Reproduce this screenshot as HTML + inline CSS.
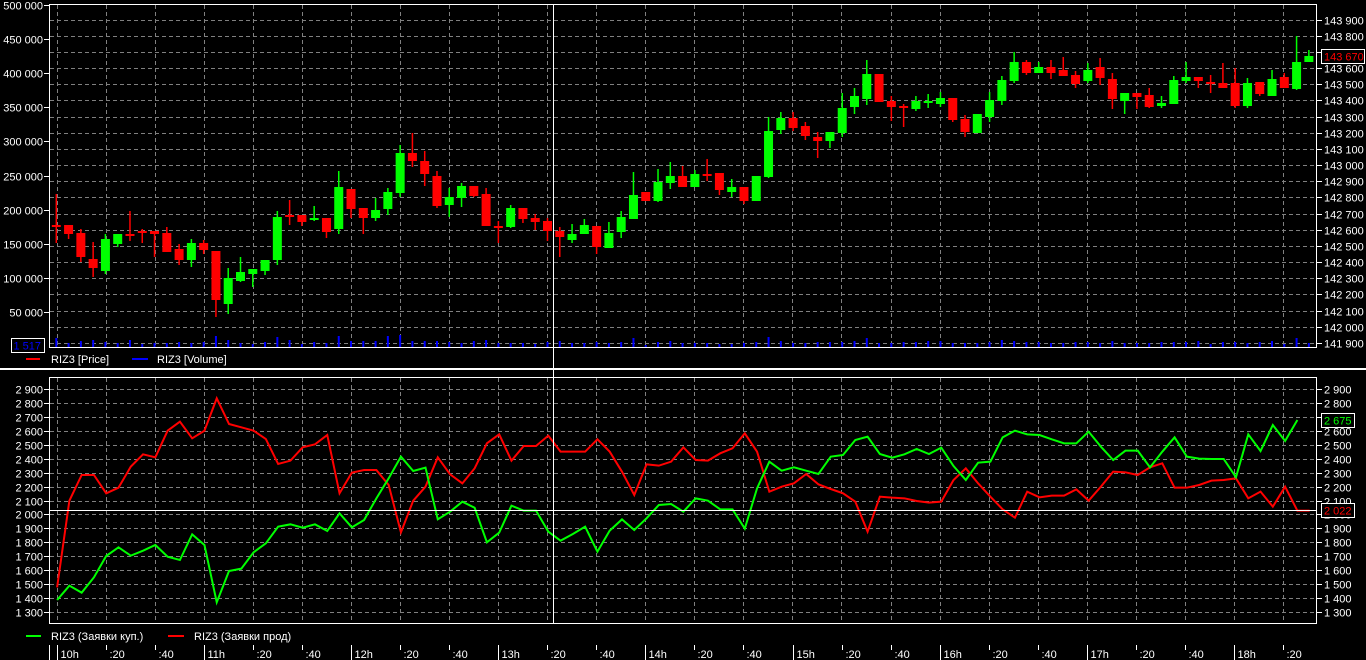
<!DOCTYPE html>
<html><head><meta charset="utf-8"><style>
html,body{margin:0;padding:0;background:#000;width:1366px;height:660px;overflow:hidden}
svg{display:block}
text{font-family:"Liberation Sans","DejaVu Sans",sans-serif;font-size:11px;fill:#fff}
</style></head><body>
<svg id="s" width="1366" height="660" xmlns="http://www.w3.org/2000/svg">
<rect width="1366" height="660" fill="#000"/>
<g id="grid" stroke="#808080" stroke-width="1" stroke-dasharray="4,3"></g>
<g id="cand"></g>
<g id="vol" fill="#0000ff"></g>
<!-- bottom lines -->
<g transform="translate(57.1,380) scale(12.28,0.33333)" fill="none">
<polyline vector-effect="non-scaling-stroke" stroke="#ff0000" stroke-width="2" points="0,622 1,362 2,285 3,285 4,340 5,323 6,260 7,223 8,232 9,152 10,125 11,175 12,152 13,55 14,132 15,142 16,152 17,177 18,252 19,242 20,202 21,193 22,165 23,340 24,278 25,270 26,270 27,315 28,457 29,362 30,320 31,232 32,283 33,310 34,265 35,190 36,163 37,242 38,198 39,198 40,167 41,215 42,215 43,215 44,178 45,215 46,275 47,345 48,253 49,257 50,245 51,202 52,240 53,242 54,220 55,205 56,160 57,215 58,335 59,320 60,310 61,282 62,313 63,327 64,340 65,365 66,455 67,350 68,353 69,355 70,363 71,368 72,365 73,300 74,265 75,310 76,350 77,388 78,413 79,335 80,352 81,347 82,347 83,328 84,362 85,320 86,275 87,277 88,285 89,262 90,250 91,323 92,323 93,315 94,302 95,300 96,295 97,355 98,335 99,380 100,320 101,392 102,392"/>
<polyline vector-effect="non-scaling-stroke" stroke="#00ff00" stroke-width="2" points="0,660 1,617 2,638 3,592 4,528 5,502 6,527 7,512 8,495 9,530 10,540 11,463 12,495 13,667 14,573 15,566 16,517 17,490 18,440 19,433 20,443 21,433 22,453 23,400 24,442 25,420 26,355 27,295 28,230 29,273 30,263 31,418 32,395 33,365 34,383 35,487 36,458 37,377 38,392 39,392 40,455 41,482 42,462 43,440 44,515 45,452 46,418 47,450 48,415 49,375 50,372 51,395 52,355 53,362 54,388 55,388 56,446 57,325 58,245 59,272 60,262 61,272 62,282 63,230 64,225 65,180 66,170 67,222 68,233 69,223 70,207 71,222 72,203 73,258 74,300 75,248 76,245 77,172 78,152 79,163 80,165 81,178 82,190 83,190 84,155 85,200 86,240 87,212 88,212 89,262 90,215 91,172 92,230 93,236 94,237 95,237 96,292 97,163 98,213 99,135 100,183 101,120"/>
</g>
<!-- frames -->
<g stroke="#fff" fill="none" stroke-width="1">
<rect x="49.5" y="4.5" width="1267" height="343"/>
<rect x="49.5" y="377.5" width="1267" height="246"/>
<line x1="0" y1="369" x2="1366" y2="369" stroke-width="2"/>
<line x1="553.5" y1="5" x2="553.5" y2="624"/>
<line x1="50" y1="510.5" x2="1316" y2="510.5"/>
</g>
<g id="ticks" stroke="#fff" stroke-width="1"></g>
<g id="labels"></g>
<!-- value boxes -->
<rect x="11.5" y="338.5" width="33" height="14" fill="#000" stroke="#fff"/>
<text x="41" y="349.5" text-anchor="end" style="fill:#0000ff">1 517</text>
<rect x="1321.5" y="49.5" width="43" height="14" fill="#000" stroke="#fff"/>
<text x="1324" y="60.5" style="fill:#ff0000">143 670</text>
<rect x="1321.5" y="413.5" width="33" height="14" fill="#000" stroke="#fff"/>
<text x="1324" y="424.5" style="fill:#00ff00">2 675</text>
<rect x="1321.5" y="503.5" width="33" height="14" fill="#000" stroke="#fff"/>
<text x="1324" y="514.5" style="fill:#ff0000">2 022</text>
<!-- legends -->
<line x1="26" y1="359" x2="40" y2="359" stroke="#ff0000" stroke-width="2"/>
<text x="51" y="363">RIZ3 [Price]</text>
<line x1="132" y1="359" x2="148" y2="359" stroke="#0000ff" stroke-width="2"/>
<text x="157" y="363">RIZ3 [Volume]</text>
<line x1="26" y1="636" x2="41" y2="636" stroke="#00ff00" stroke-width="2"/>
<text x="51" y="640">RIZ3 (Заявки куп.)</text>
<line x1="168" y1="636" x2="184" y2="636" stroke="#ff0000" stroke-width="2"/>
<text x="194" y="640">RIZ3 (Заявки прод)</text>
<g id="time"></g>
</svg>
<script>
var NS="http://www.w3.org/2000/svg";
function el(p,t,a,txt){var e=document.createElementNS(NS,t);for(var k in a)e.setAttribute(k,a[k]);if(txt!==undefined)e.textContent=txt;document.getElementById(p).appendChild(e);return e;}
// grid
for(var k=0;k<=25;k++){var x=Math.round(57+49.03*k)+0.5;el("grid","line",{x1:x,y1:5,x2:x,y2:347});el("grid","line",{x1:x,y1:378,x2:x,y2:623});}
for(var k=0;k<=20;k++){var y=Math.round(19.6+16.17*k)+0.5;el("grid","line",{x1:50,y1:y,x2:1316,y2:y});}
for(var k=0;k<=16;k++){var y=Math.round(389+13.94*k)+0.5;el("grid","line",{x1:50,y1:y,x2:1316,y2:y});}
// candles
var D=[[225,227,194,243,'r'],[225,234,225,239,'r'],[233,257,229,262,'r'],[259,268,242,277,'r'],[239,271,234,274,'g'],[234,244,234,247,'g'],[234,235,211,241,'r'],[231,232,229,243,'r'],[231,234,231,257,'r'],[233,252,227,252,'r'],[249,260,244,265,'r'],[243,260,239,267,'g'],[243,250,240,254,'r'],[251,300,251,317,'r'],[278,304,268,314,'g'],[272,281,257,282,'g'],[269,274,269,287,'g'],[260,271,260,275,'g'],[217,260,211,265,'g'],[215,216,200,225,'r'],[215,222,215,226,'r'],[218,219,206,221,'g'],[218,232,218,238,'r'],[187,229,171,234,'g'],[189,209,189,218,'r'],[208,218,208,234,'r'],[210,218,198,221,'g'],[192,209,188,215,'g'],[153,193,145,197,'g'],[153,161,133,167,'r'],[161,174,151,186,'r'],[176,206,171,208,'r'],[197,205,188,217,'g'],[186,198,183,207,'g'],[186,196,186,197,'r'],[194,226,188,226,'r'],[226,227,221,243,'r'],[208,227,205,228,'g'],[208,219,208,223,'r'],[218,222,214,230,'r'],[221,231,218,241,'r'],[231,237,227,257,'r'],[234,240,224,243,'g'],[225,234,219,234,'g'],[226,247,226,254,'r'],[233,248,222,248,'g'],[217,232,211,238,'g'],[195,219,172,219,'g'],[192,201,192,201,'r'],[182,201,169,202,'g'],[176,183,162,189,'g'],[176,187,166,187,'r'],[174,187,170,187,'g'],[174,175,159,181,'r'],[173,190,173,195,'r'],[187,192,179,197,'g'],[187,201,187,204,'r'],[176,201,176,201,'g'],[131,177,117,178,'g'],[118,130,112,134,'g'],[118,128,112,131,'r'],[126,136,122,140,'r'],[137,141,132,158,'r'],[132,141,132,148,'g'],[108,133,93,137,'g'],[96,107,88,114,'g'],[74,99,60,105,'g'],[74,102,74,102,'r'],[101,107,96,121,'r'],[106,107,104,127,'r'],[101,109,96,111,'g'],[101,102,94,108,'g'],[98,104,92,107,'g'],[98,120,98,122,'r'],[119,132,115,137,'r'],[114,133,114,133,'g'],[100,117,92,122,'g'],[80,101,76,105,'g'],[62,81,52,83,'g'],[62,73,60,75,'r'],[67,73,62,73,'g'],[67,73,60,79,'r'],[70,76,57,76,'r'],[75,84,71,88,'r'],[70,81,63,83,'g'],[67,78,58,85,'r'],[79,99,73,109,'r'],[93,101,93,114,'g'],[93,97,93,109,'r'],[95,107,88,108,'r'],[103,106,96,108,'g'],[80,104,76,104,'g'],[77,81,62,83,'g'],[77,81,77,88,'r'],[82,83,75,93,'r'],[83,88,63,88,'r'],[83,106,68,108,'r'],[83,106,78,108,'g'],[82,94,82,96,'r'],[79,96,70,96,'g'],[77,88,73,88,'r'],[62,89,36,90,'g'],[56,62,50,62,'g']];
var VH=[9,4,6,7,5,4,7,3,4,4,5,4,5,11,7,4,3,5,10,7,3,5,4,11,6,6,6,11,12,6,6,6,5,4,6,7,4,4,4,3,5,6,4,4,5,4,5,9,2,5,6,4,4,4,3,3,4,5,10,6,4,4,5,5,5,6,9,4,4,5,5,6,6,4,4,4,5,7,6,5,5,4,4,5,5,4,6,4,4,4,5,5,5,6,3,5,5,4,5,6,3,9,4];
for(var i=0;i<D.length;i++){var d=D[i],c=56.3+12.28*i,col=d[4]=='r'?'#ff0000':'#00ff00';
el("cand","rect",{x:c-0.75,y:d[2],width:1.5,height:Math.max(1,d[3]-d[2]),fill:col});
var h=Math.max(2,d[1]-d[0]);el("cand","rect",{x:c-4.5,y:d[0],width:9,height:h,fill:col});
el("vol","rect",{x:c-1,y:347-VH[i],width:2,height:VH[i]});}
// left labels top
var L=["500 000","450 000","400 000","350 000","300 000","250 000","200 000","150 000","100 000","50 000"];
for(var k=0;k<L.length;k++){var y=Math.round(4.5+34.2*k)+0.5;el("ticks","line",{x1:44,y1:y,x2:49,y2:y});el("labels","text",{x:43,y:y+4,"text-anchor":"end"},L[k]);}
// right labels top
for(var k=0;k<=20;k++){var y=Math.round(19.6+16.17*k)+0.5;var v=143900-100*k;var s=String(v);s=s.slice(0,3)+" "+s.slice(3);el("ticks","line",{x1:1317,y1:y,x2:1322,y2:y});if(!(k==2||k==3&&false))el("labels","text",{x:1324,y:y+4},s);}
// bottom labels
for(var k=0;k<=16;k++){var y=Math.round(389+13.94*k)+0.5;var v=2900-100*k;var s=String(v);s=s[0]+" "+s.slice(1);el("ticks","line",{x1:44,y1:y,x2:49,y2:y});el("ticks","line",{x1:1317,y1:y,x2:1322,y2:y});el("labels","text",{x:43,y:y+4,"text-anchor":"end"},s);el("labels","text",{x:1324,y:y+4},s);}
// time axis
el("time","line",{x1:49.5,y1:645,x2:49.5,y2:660,stroke:"#fff"});
var hrs=["10h","11h","12h","13h","14h","15h","16h","17h","18h"];
for(var h=0;h<9;h++){var x0=57+147.1*h;
 for(var m=0;m<3;m++){var x=Math.round(x0+49.03*m)+0.5;if(x>1316)break;
  el("time","line",{x1:x,y1:645,x2:x,y2:m==0?660:650,stroke:"#fff"});
  el("time","text",{x:x+3,y:658,"font-size":"12"},m==0?hrs[h]:(m==1?":20":":40"));}}
</script>
</body></html>
